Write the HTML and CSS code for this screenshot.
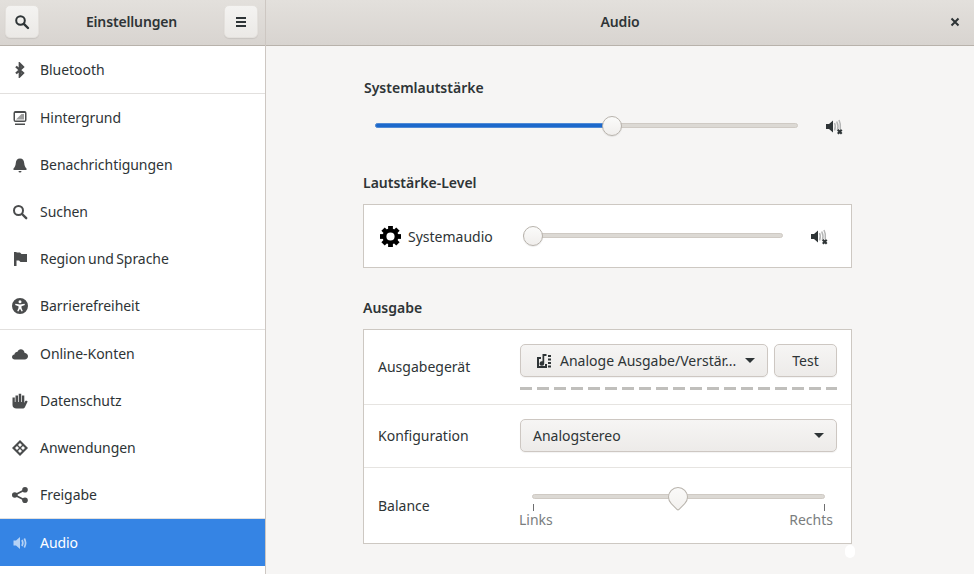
FILE: index.html
```html
<!DOCTYPE html>
<html lang="de">
<head>
<meta charset="utf-8">
<title>Einstellungen</title>
<link rel="stylesheet" href="styles.css">
</head>
<body>
<div class="window">
  <aside class="sidebar">
    <header class="bar side-bar">
      <button class="hbtn"><svg class="ic dark" viewBox="0 0 16 16"><circle cx="6.500" cy="6.500" r="4.300" fill="none" stroke="currentColor" stroke-width="2"/><path d="M9.800 9.800 14 14" stroke="currentColor" stroke-width="2.400" stroke-linecap="round"/></svg></button>
      <span class="bar-title">Einstellungen</span>
      <button class="hbtn"><svg class="ic dark" viewBox="0 0 16 16"><path d="M3 3h10v2H3zM3 7h10v2H3zM3 11h10v2H3z" fill="currentColor"/></svg></button>
    </header>
    <nav class="nav">
      <div class="item sep"><svg class="ic" viewBox="0 0 16 16"><path d="M4 4.500 11 11 7.800 14.200V1.800L11 5 4 11.500" fill="none" stroke="currentColor" stroke-width="2.300"/></svg><span>Bluetooth</span></div>
      <div class="item"><svg class="ic" viewBox="0 0 16 16"><path d="M3.500 1h9A2 2 0 0 1 14.500 3v7a2 2 0 0 1-2 2h-9a2 2 0 0 1-2-2V3a2 2 0 0 1 2-2zM3 3v7.500h10V3z" fill="currentColor" fill-rule="evenodd"/><path d="M4 9.500 9.500 4H12v5.500z" fill="currentColor" opacity=".55"/><path d="M3 13.500h10V15H3z" fill="currentColor"/></svg><span>Hintergrund</span></div>
      <div class="item"><svg class="ic" viewBox="0 0 16 16"><path d="M8 1.500c2.800 0 4 2 4.200 4.500.2 2.600 1 4.300 2.300 5.500V13h-13v-1.500C2.800 10.300 3.600 8.600 3.800 6 4 3.500 5.200 1.500 8 1.500zM6.500 14h3A1.500 1.500 0 0 1 6.500 14z" fill="currentColor"/></svg><span>Benachrichtigungen</span></div>
      <div class="item"><svg class="ic" viewBox="0 0 16 16"><circle cx="6.500" cy="6.500" r="4.500" fill="none" stroke="currentColor" stroke-width="2"/><path d="M10 10 14.200 14.200" stroke="currentColor" stroke-width="2.400" stroke-linecap="round"/></svg><span>Suchen</span></div>
      <div class="item"><svg class="ic" viewBox="0 0 16 16"><path d="M2 1h2.500v.500H8l1.500 1.500H15v8H8.500L7 9.500H4.500V15H2z" fill="currentColor"/></svg><span>Region und Sprache</span></div>
      <div class="item sep"><svg class="ic" viewBox="0 0 16 16"><path d="M8 0a8 8 0 1 1 0 16A8 8 0 0 1 8 0zM8 2.300a1.500 1.500 0 1 0 0 3 1.500 1.500 0 0 0 0-3zM3.500 5.800l-.4 1.200 3.400 1.200v1.700L5.200 13l1.200.5L8 10.700l1.600 2.800 1.200-.5-1.300-2.900V8.200L12.900 7l-.4-1.200L8 6.500z" fill="currentColor" fill-rule="evenodd"/></svg><span>Barrierefreiheit</span></div>
      <div class="item"><svg class="ic" viewBox="0 0 16 16"><path d="M2.700 13.500C1.200 13.500 0 12.400 0 11c0-1.400 1-2.400 2.400-2.600C2.700 6.800 4 5.700 5.500 5.700c.5-1.500 1.800-2.400 3.300-2.400 2 0 3.500 1.500 3.700 3.500 2 .2 3.500 1.700 3.500 3.500 0 1.800-1.500 3.200-3.300 3.200z" fill="currentColor"/></svg><span>Online-Konten</span></div>
      <div class="item"><svg class="ic" viewBox="0 0 16 16"><path d="M.500 4.500h2.300V9h.7V2.500H6V9h.7V.800h2.500V9h.7V2.500h2.400V10l1-2c.5-.7 2.400-.3 2.200.7L13 14c-.5 1-1.500 1.500-2.500 1.500H4.500C2 15.500.500 14 .500 12z" fill="currentColor"/></svg><span>Datenschutz</span></div>
      <div class="item"><svg class="ic" viewBox="0 0 16 16"><path d="M8 0 16 8 8 16 0 8zM8 3 6 5 8 7 10 5zM5 6 3 8 5 10 7 8zM11 6 9 8 11 10 13 8zM8 9 6 11 8 13 10 11z" fill="currentColor" fill-rule="evenodd"/></svg><span>Anwendungen</span></div>
      <div class="item sep"><svg class="ic" viewBox="0 0 16 16"><circle cx="2.800" cy="8" r="2.800" fill="currentColor"/><circle cx="13" cy="2.800" r="2.800" fill="currentColor"/><circle cx="13" cy="13.200" r="2.800" fill="currentColor"/><path d="M13 2.800 2.800 8 13 13.200" fill="none" stroke="currentColor" stroke-width="1.800"/></svg><span>Freigabe</span></div>
      <div class="item active"><svg class="ic" viewBox="0 0 16 16"><path d="M1.500 5.500H4L8 2v12L4 10.500H1.500z" fill="currentColor"/><path d="M10 5c1 1.800 1 4.200 0 6M12.300 3.500c1.600 2.800 1.600 6.200 0 9" fill="none" stroke="currentColor" stroke-width="1.700"/></svg><span>Audio</span></div>
    </nav>
  </aside>
  <main class="main">
    <header class="bar main-bar">
      <span class="bar-title">Audio</span>
      <svg class="close" viewBox="0 0 10 10"><path d="M1.500 1.500 8.500 8.500M8.500 1.500 1.500 8.500" stroke="currentColor" stroke-width="2"/></svg>
    </header>
    <div class="content">
      <h2 class="h-system">Systemlautstärke</h2>
      <div class="volume">
        <div class="slider sys"><div class="fill"></div><div class="thumb"></div></div>
        <svg class="mute" viewBox="0 0 18 16"><path d="M1 5h3l4-3.500v12L4 10H1z" fill="#2e3436"/><path d="M9.500 4c1 2 1 5 0 7.500M11.700 2.500c1.500 3 1.500 6.500.7 9M14 1c1.500 3 1.800 6 1.300 9" fill="none" stroke="#b5b6b6" stroke-width="1.500"/><path d="M12.800 10.800 16.700 14.700M16.700 10.800 12.800 14.700" stroke="#2e3436" stroke-width="2.200"/></svg>
      </div>
      <h2 class="h-level">Lautstärke-Level</h2>
      <section class="card level-card">
        <svg class="gear" viewBox="0 0 22 22"><circle cx="11" cy="11" r="6.300" fill="none" stroke="#000" stroke-width="4"/><g class="teeth"><rect x="8.500" y="0" width="5" height="5"/><rect x="8.500" y="0" width="5" height="5" transform="rotate(45 11 11)"/><rect x="8.500" y="0" width="5" height="5" transform="rotate(90 11 11)"/><rect x="8.500" y="0" width="5" height="5" transform="rotate(135 11 11)"/><rect x="8.500" y="0" width="5" height="5" transform="rotate(180 11 11)"/><rect x="8.500" y="0" width="5" height="5" transform="rotate(225 11 11)"/><rect x="8.500" y="0" width="5" height="5" transform="rotate(270 11 11)"/><rect x="8.500" y="0" width="5" height="5" transform="rotate(315 11 11)"/></g></svg>
        <span class="level-name">Systemaudio</span>
        <div class="slider lvl"><div class="thumb"></div></div>
        <svg class="mute" viewBox="0 0 18 16"><path d="M1 5h3l4-3.500v12L4 10H1z" fill="#2e3436"/><path d="M9.500 4c1 2 1 5 0 7.500M11.700 2.500c1.500 3 1.500 6.500.7 9M14 1c1.500 3 1.800 6 1.300 9" fill="none" stroke="#b5b6b6" stroke-width="1.500"/><path d="M12.800 10.800 16.700 14.700M16.700 10.800 12.800 14.700" stroke="#2e3436" stroke-width="2.200"/></svg>
      </section>
      <h2 class="h-output">Ausgabe</h2>
      <section class="card output-card">
        <div class="row row-device">
          <span class="label">Ausgabegerät</span>
          <div class="device-col">
            <div class="device-btns">
              <button class="btn device"><svg class="dev-ic" viewBox="0 0 16 16"><path d="M1 4h4v2H3v7h6v-2h2v4H1z" fill="#2e3436"/><path d="M6.500 1H10.500V3H8.200V10.500A2.300 2.300 0 1 1 6.500 8.300z" fill="#2e3436"/><path d="M12 2h3v2h-3zM12 5.500h3v2h-3zM12 9h3v2h-3zM12 12.500h3v2h-3z" fill="#2e3436"/></svg><span class="grow">Analoge Ausgabe/Verstär...</span><i class="caret"></i></button>
              <button class="btn test">Test</button>
            </div>
            <div class="dashes"></div>
          </div>
        </div>
        <div class="row row-config">
          <span class="label">Konfiguration</span>
          <button class="btn config"><span class="grow">Analogstereo</span><i class="caret"></i></button>
        </div>
        <div class="row row-balance">
          <span class="label">Balance</span>
          <div class="balance">
            <div class="slider bal"><div class="thumb pin"></div></div>
            <div class="ticks"><i></i><i></i></div>
            <div class="marks"><span>Links</span><span>Rechts</span></div>
          </div>
        </div>
      </section>
    </div>
    <div class="cursor"></div>
  </main>
</div>
</body>
</html>
```
FILE: styles.css
```css
* { box-sizing: border-box; }
html, body { margin: 0; height: 100%; overflow: hidden; }
body { font-family: "Noto Sans", sans-serif; font-size: 14px; color: #2e3436; background: #f6f5f4; }
.window { display: flex; width: 974px; height: 574px; overflow: hidden; }
.sidebar { width: 266px; flex: none; display: flex; flex-direction: column; background: #fff; border-right: 1px solid #cdc7c2; }
.main { flex: 1; position: relative; display: flex; flex-direction: column; background: #f6f5f4; }
.bar { height: 46px; flex: none; display: flex; align-items: center; background: linear-gradient(#e3e0dc, #d8d4d0); border-bottom: 1px solid #b8b2ab; }
.side-bar { justify-content: space-between; padding: 0 7px 2px 5px; }
.bar-title { font-weight: 600; font-size: 14px; letter-spacing: -.15px; color: #2e3436; }
.hbtn { width: 34px; height: 33px; padding: 0; display: flex; align-items: center; justify-content: center; border: 1px solid #e4e1dd; border-radius: 5px; background: linear-gradient(#f4f3f1, #ebe9e6); box-shadow: 0 1px 1px rgba(0,0,0,.08); color: #2e3436; }
.ic { width: 16px; height: 16px; flex: none; color: #4a4c4d; }
.ic.dark { color: #2e3436; }
.nav { display: flex; flex-direction: column; flex: 1; }
.item { height: 47px; flex: none; display: flex; align-items: center; gap: 12px; padding: 0 0 0 12px; font-size: 14px; word-spacing: -1.2px; letter-spacing: -.05px; color: #2e3436; }
.item.sep { height: 48px; border-bottom: 1px solid #e2e0de; }
.item.active { background: #3584e4; color: #fff; }
.item.active .ic { color: #b5d2f5; }
.main-bar { justify-content: center; position: relative; padding-bottom: 2px; }
.close { position: absolute; right: 14px; top: 17px; width: 10px; height: 10px; color: #2e3436; }
.content { flex: 1; display: flex; flex-direction: column; width: 489px; margin-left: 97px; }
h2 { margin: 0; font-size: 14px; font-weight: 600; line-height: 20px; color: #2e3436; }
.h-system { margin: 32px 0 0 1px; }
.volume { display: flex; align-items: center; height: 31px; margin-top: 12px; padding-left: 12px; }
.slider { position: relative; height: 5px; border-radius: 3px; background: #dcd9d4; border: 1px solid #cfcac4; }
.slider.sys { width: 423px; }
.volume .mute { margin-left: 27px; margin-top: 2px; }
.fill { position: absolute; left: -1px; top: -1px; height: 5px; width: 237px; border-radius: 3px; background: #1c68cb; border: 1px solid #4f8ad6; }
.thumb { position: absolute; top: -8px; width: 20px; height: 20px; border-radius: 50%; background: linear-gradient(#fbfbfa, #f0eeec); border: 1px solid #b8b3ac; box-shadow: 0 1px 1px rgba(0,0,0,.08); }
.sys .thumb { left: 226px; }
.mute { width: 18px; height: 16px; flex: none; }
.h-level { margin-top: 32px; }
.card { background: #fff; border: 1px solid #cdc8c2; }
.level-card { height: 64px; margin-top: 11px; display: flex; align-items: center; padding-left: 16px; }
.gear { width: 21px; height: 21px; flex: none; }
.teeth { fill: #000; }
.level-name { margin-left: 7px; width: 115px; flex: none; }
.slider.lvl { width: 260px; margin-top: -1px; }
.lvl .thumb { left: -1px; }
.level-card .mute { margin-left: 27px; margin-top: 1px; }
.h-output { margin-top: 30px; }
.output-card { margin-top: 11px; height: 215px; display: flex; flex-direction: column; }
.row { display: flex; padding: 0 14px; }
.label { width: 142px; flex: none; }
.row-device { height: 75px; padding-top: 14px; border-bottom: 1px solid #e6e4e1; }
.row-device .label { margin-top: 13px; }
.device-col { width: 317px; flex: none; }
.device-btns { display: flex; gap: 6px; }
.btn { height: 33px; padding: 0 12px; display: flex; align-items: center; font: inherit; color: #2e3436; border: 1px solid #cdc7c2; border-radius: 5px; background: linear-gradient(#f6f5f4, #edebe9); box-shadow: 0 1px 1px rgba(0,0,0,.05); text-align: left; }
.device { width: 248px; padding: 0 12px 0 15px; }
.test { width: 63px; justify-content: center; padding: 0; }
.dev-ic { width: 16px; height: 16px; flex: none; margin-right: 8px; }
.grow { flex: 1; white-space: nowrap; }
.caret { width: 0; height: 0; flex: none; border-left: 5px solid transparent; border-right: 5px solid transparent; border-top: 5px solid #2e3436; }
.dashes { height: 3px; margin-top: 10px; background: repeating-linear-gradient(90deg, #c0bfbc 0 12px, transparent 12px 17px); }
.row-config { height: 63px; align-items: center; padding-bottom: 1px; border-bottom: 1px solid #e6e4e1; }
.config { width: 317px; }
.row-balance { flex: 1; align-items: center; }
.balance { width: 317px; flex: none; margin-top: 7px; }
.slider.bal { width: 293px; margin-left: 12px; margin-top: 4px; }
.bal .thumb { left: 135px; }
.thumb.pin { border-radius: 50% 50% 2px 50%; transform: rotate(45deg); background: linear-gradient(-45deg, #f3f1ef, #fbfbfa); box-shadow: none; }
.ticks { display: flex; justify-content: space-between; margin: 5px 12px 0 13px; width: 292px; height: 7px; }
.ticks i { width: 1px; background: #6e6f70; }
.marks { display: flex; justify-content: space-between; padding: 0 4px 0 0; margin-left: -1px; font-size: 14px; line-height: 18px; color: #7a7d7e; }
.cursor { position: absolute; left: 579px; top: 545px; width: 10px; height: 13px; border-radius: 5px; background: #fff; }
```
